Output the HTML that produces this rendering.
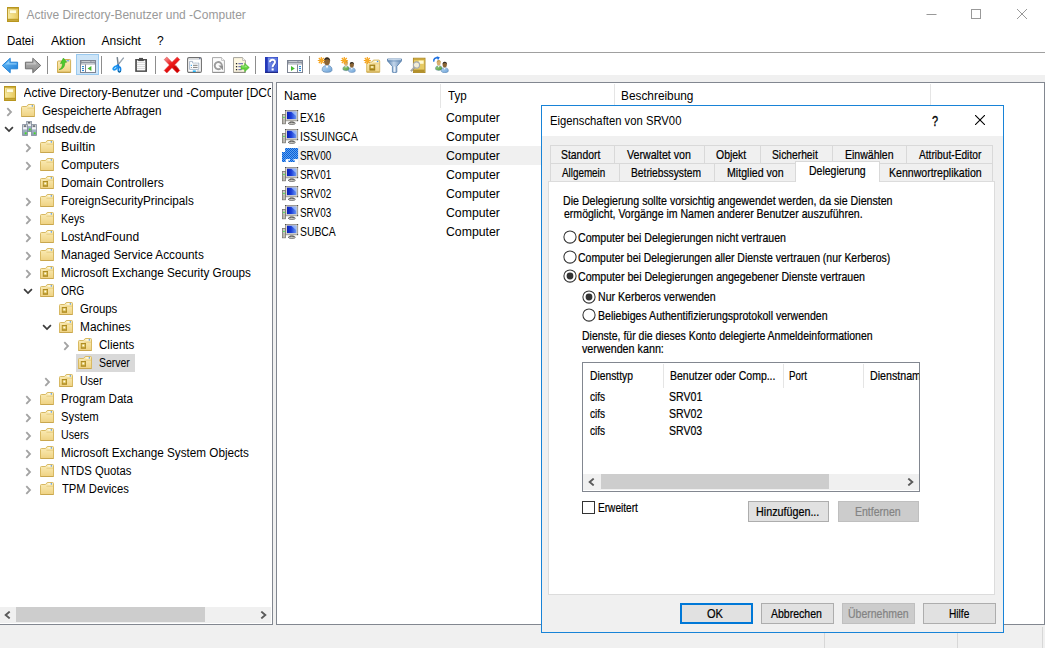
<!DOCTYPE html>
<html lang="de"><head><meta charset="utf-8"><title>Active Directory-Benutzer und -Computer</title>
<style>
html,body{margin:0;padding:0}
body{width:1045px;height:648px;overflow:hidden;position:relative;background:#f0f0f0;font-family:"Liberation Sans",sans-serif;font-size:12px;color:#000}
div,span,svg{position:absolute;box-sizing:border-box}
.abs{position:absolute}
.sec{left:0;top:0;width:1045px;height:648px}
.t{white-space:nowrap;line-height:16px;height:16px;transform-origin:0 0}
.d{font-size:13px;-webkit-text-stroke:0.22px currentColor}
.titlebar{left:0;top:0;width:1045px;height:30px;background:#fff}
.menubar{left:0;top:30px;width:1045px;height:22px;background:#fff}
.toolbar{left:0;top:52px;width:1045px;height:23px;background:#fff;border-top:1px solid #a0a0a0}
.tbhot{left:76px;top:54px;width:23px;height:21px;background:#cce4f7;border:1px solid #99c9ef}
.tbsep{top:56px;width:1px;height:18px;background:#8d8d8d}
.tree{left:0;top:82px;width:273px;height:543px;background:#fff;border-top:1px solid #828790;border-right:1px solid #828790;border-bottom:1px solid #828790}
.treesel{left:76px;top:354px;width:59px;height:18px;background:#d9d9d9}
.list{left:276px;top:82px;width:769px;height:543px;background:#fff;border:1px solid #828790}
.lsel{left:298px;top:146px;width:243px;height:19px;background:#f0f0f0}
.hsep{top:84px;width:1px;height:24px;background:#e5e5e5}
.status{left:0;top:625px;width:1045px;height:23px;background:#f0f0f0}
.ssep{top:627px;width:1px;height:21px;background:#d7d7d7}
.dialog{left:541px;top:105px;width:463px;height:528px;background:#f0f0f0;border:1px solid #1883d7}
.dtitle{left:542px;top:106px;width:461px;height:30px;background:#fff}
.tab{background:#f0f0f0;border:1px solid #d9d9d9}
.pane{left:548px;top:181px;width:447px;height:414px;background:#fff;border:1px solid #dcdcdc}
.tabsel{left:795px;top:161px;width:85px;height:21px;background:#fff;border:1px solid #d9d9d9;border-bottom:none}
.lb{left:582px;top:362px;width:338px;height:130px;background:#fff;border:1px solid #828790}
.lbsep{top:364px;width:1px;height:24px;background:#e5e5e5}
.cb{left:582px;top:501px;width:13px;height:13px;background:#fff;border:1px solid #333}
.btn{background:#e1e1e1;border:1px solid #adadad}
.btn.def{border:2px solid #0078d7}
.btn.dis{background:#cccccc;border-color:#bfbfbf}
.sb{background:#f0f0f0}
.sbth{background:#cdcdcd}
</style></head>
<body>
<svg class="abs" style="left:0;top:0" width="0" height="0"><defs><linearGradient id="gFold" x1="0" y1="0" x2="0" y2="1"><stop offset="0" stop-color="#fbeebb"/><stop offset="1" stop-color="#efd282"/></linearGradient><linearGradient id="gMmc" x1="0" y1="0" x2="1" y2="0"><stop offset="0" stop-color="#f6e9a2"/><stop offset=".6" stop-color="#efd878"/><stop offset="1" stop-color="#e5c55c"/></linearGradient><linearGradient id="gBack" x1="0" y1="0" x2="1" y2="1"><stop offset="0" stop-color="#6cc3fb"/><stop offset="1" stop-color="#1878d6"/></linearGradient><linearGradient id="gFwd" x1="0" y1="0" x2="0" y2="1"><stop offset="0" stop-color="#b9b9b9"/><stop offset="1" stop-color="#8a8a8a"/></linearGradient><linearGradient id="gX" x1="0" y1="0" x2="0.6" y2="1"><stop offset="0" stop-color="#f7a3a3"/><stop offset=".5" stop-color="#ee1a1a"/><stop offset="1" stop-color="#d40000"/></linearGradient><linearGradient id="gScr" x1="0" y1="0" x2="1" y2="0"><stop offset="0" stop-color="#0a1fb8"/><stop offset=".45" stop-color="#1c3fd8"/><stop offset="1" stop-color="#6d9af5"/></linearGradient><linearGradient id="gHelp" x1="0" y1="0" x2="1" y2="1"><stop offset="0" stop-color="#7d95ee"/><stop offset="1" stop-color="#3f5bd2"/></linearGradient><linearGradient id="gFun" x1="0" y1="0" x2="1" y2="0"><stop offset="0" stop-color="#5f86b0"/><stop offset=".45" stop-color="#c2d5ea"/><stop offset="1" stop-color="#6a8fb8"/></linearGradient><linearGradient id="gBody" x1="0" y1="0" x2="1" y2="1"><stop offset="0" stop-color="#b5d5f2"/><stop offset="1" stop-color="#6ea4d8"/></linearGradient><linearGradient id="gBodyG" x1="0" y1="0" x2="1" y2="1"><stop offset="0" stop-color="#9ad07f"/><stop offset="1" stop-color="#4f9a3a"/></linearGradient><linearGradient id="gTow" x1="0" y1="0" x2="0" y2="1"><stop offset="0" stop-color="#eef0f3"/><stop offset=".42" stop-color="#d3d9e1"/><stop offset=".5" stop-color="#a3b2c5"/><stop offset="1" stop-color="#8b9cb2"/></linearGradient><pattern id="pDith" width="2" height="2" patternUnits="userSpaceOnUse"><rect width="2" height="2" fill="#5aa0f0"/><rect width="1" height="1" fill="#0a5fd8"/><rect x="1" y="1" width="1" height="1" fill="#0a5fd8"/></pattern></defs></svg>
<div class="sec"><div class="titlebar"></div>
<svg class="abs" style="left:7px;top:7px" width="12" height="15" viewBox="0 0 12 15"><rect x="0.5" y="0.5" width="11" height="14" fill="url(#gMmc)" stroke="#bb9a2c"/><rect x="0.3" y="0" width="11.4" height="1.6" fill="#b8961e"/><rect x="0.3" y="11.8" width="11.4" height="3.2" fill="#b8961e"/><rect x="1.2" y="12.7" width="9.6" height="1" fill="#cdb048"/><rect x="2.6" y="3" width="6.6" height="3.4" fill="#fffde2" stroke="#e0c566" stroke-width=".5"/></svg>
<span class="t" style="left:26.40px;top:7px;color:#999;">Active Directory-Benutzer und -Computer</span>
<svg class="abs" style="left:920px;top:4px" width="120" height="22" viewBox="0 0 120 22"><g stroke="#999" stroke-width="1" fill="none"><path d="M6.5 10.5h10"/><rect x="51.5" y="5.5" width="9" height="9"/><path d="M97 5l10 10M107 5l-10 10"/></g></svg>
</div>
<div class="sec"><div class="menubar"></div>
<span class="t" style="left:7.14px;top:33px;transform:scaleX(0.9562);">Datei</span>
<span class="t" style="left:50.60px;top:33px;transform:scaleX(1.0338);">Aktion</span>
<span class="t" style="left:101.60px;top:33px;">Ansicht</span>
<span class="t" style="left:157.10px;top:33px;">?</span>
</div>
<div class="sec"><div class="toolbar"></div>
<div class="tbhot"></div>
<div class="tbsep" style="left:47px"></div>
<div class="tbsep" style="left:101px"></div>
<div class="tbsep" style="left:155px"></div>
<div class="tbsep" style="left:255px"></div>
<div class="tbsep" style="left:309px"></div>
<svg class="abs" style="left:1px;top:57px" width="18" height="17" viewBox="0 0 18 17"><path d="M1.3 8.5L9.2 1.2V5.2H16.6V11.8H9.2V15.8Z" fill="url(#gBack)" stroke="#2283d8" stroke-width="1" stroke-linejoin="round"/><path d="M3.4 8.3L8.3 3.8V6.2H15.6V7.6H4.6z" fill="#a6dcff" opacity=".7"/></svg><svg class="abs" style="left:24px;top:57px" width="18" height="17" viewBox="0 0 18 17"><path d="M16.7 8.5L8.8 1.2V5.2H1.4V11.8H8.8V15.8Z" fill="url(#gFwd)" stroke="#6f6f6f" stroke-width="1" stroke-linejoin="round"/><path d="M2.4 6.2H9.7V3.9L12 6.2V7.4H2.4z" fill="#d2d2d2" opacity=".7"/></svg><svg class="abs" style="left:57px;top:57px" width="15" height="16" viewBox="0 0 15 16"><path d="M0.5 4.8Q0.5 4 1.3 4H5.2L6.6 2.5H12.8Q13.6 2.5 13.6 3.3V15.3H0.5z" fill="url(#gFold)" stroke="#d2b055"/><path d="M0.5 15.3H13.6" stroke="#c09c40"/><rect x="9.6" y="3.3" width="2.6" height="1" fill="#4a8fe6"/><path d="M2 12.6C4.4 11.6 5.6 9.2 5.4 6.2L3.4 6.6L6.4 1L9.8 5.2L7.8 5.4C8 9.4 6 12.4 2 12.6z" fill="#4ccb2c" stroke="#2f9f1c" stroke-width=".5"/></svg><svg class="abs" style="left:80px;top:60px" width="16" height="13" viewBox="0 0 16 13"><rect x="0.5" y="0.5" width="15" height="12" fill="#fff" stroke="#7e8492"/><rect x="1" y="1" width="14" height="3.4" fill="#8b909c"/><path d="M1.6 1.6H10.4" stroke="#dfe2e6" stroke-width=".8"/><path d="M1.4 3.5H14.6" stroke="#d4d8de" stroke-width=".8"/><rect x="11.6" y="1.1" width="1" height="1" fill="#e8eaee"/><rect x="13.5" y="1.1" width="1" height="1" fill="#e8eaee"/><path d="M5.5 4.4V12.5" stroke="#7e8492"/><rect x="2" y="6" width="2" height="1.1" fill="#2f8bd6"/><rect x="2" y="8" width="2" height="1.1" fill="#2f8bd6"/><rect x="2" y="10" width="2" height="1.1" fill="#2f8bd6"/><path d="M11.4 5.9V11.1L7.6 8.5z" fill="#43ba2c"/></svg><svg class="abs" style="left:112px;top:56px" width="13" height="17" viewBox="0 0 13 17"><path d="M5.2 1.2L6.2 9.2" stroke="#76838f" stroke-width="1.5"/><path d="M11.7 1.6L6 8.8" stroke="#8593a1" stroke-width="1.3"/><path d="M11.7 1.6L8.2 6" stroke="#dfe6ec" stroke-width=".5" stroke-dasharray="0.8 0.8"/><path d="M6.2 8.6L4.6 10.4" stroke="#1f93ee" stroke-width="1.8"/><path d="M6 8.6L7 11" stroke="#1b6fd0" stroke-width="1.6"/><ellipse cx="3.2" cy="12" rx="2.3" ry="1.3" transform="rotate(-42 3.2 12)" fill="#eaf6ff" stroke="#1a96f2" stroke-width="1.7"/><ellipse cx="7.4" cy="13.4" rx="1.2" ry="2.3" fill="#eaf6ff" stroke="#1786e6" stroke-width="1.6"/><path d="M5.9 15.2Q7.4 17 8.9 15.2" fill="none" stroke="#165a78" stroke-width=".9"/></svg><svg class="abs" style="left:135px;top:57px" width="12" height="15" viewBox="0 0 12 15"><rect x="0.2" y="2" width="11.8" height="12.9" fill="#4d4d4d"/><rect x="1.9" y="3.4" width="8.4" height="10" fill="#fff"/><rect x="4" y="0.9" width="4" height="1.4" fill="#4d4d4d"/><rect x="3.2" y="2.9" width="5.6" height="1.2" fill="#4d4d4d"/><path d="M1.9 5.6h8.4M1.9 7.6h8.4M1.9 9.6h8.4M1.9 11.6h8.4" stroke="#c9c9c9" stroke-width=".7"/></svg><svg class="abs" style="left:163px;top:56px" width="18" height="18" viewBox="0 0 18 18"><path d="M1.2 3.6L3.8 1L9 6.3L14.2 1L16.8 3.6L11.6 9L16.8 14.4L14.2 17L9 11.7L3.8 17L1.2 14.4L6.4 9Z" fill="url(#gX)" stroke="#d63a3a" stroke-width=".5" stroke-linejoin="round"/><path d="M10.6 11.2L13 9L16 13L13.8 15z" fill="#b80000" opacity=".55"/></svg><svg class="abs" style="left:187px;top:57px" width="15" height="16" viewBox="0 0 15 16"><rect x="0.6" y="0.6" width="13.8" height="14.8" rx="1.4" fill="#fff" stroke="#707070" stroke-width="1.1"/><path d="M1.4 2.4H13.6" stroke="#d5d8dc" stroke-width=".9"/><rect x="12.2" y="0.9" width="1.2" height="1.2" fill="#5a6b9a"/><path d="M2.6 4.4H5.6V6H11.8V12.4H2.6z" fill="#fff" stroke="#a4b3c6" stroke-width=".9"/><rect x="6.4" y="4.9" width="2" height="1" fill="#e9edf2"/><rect x="9.2" y="4.9" width="2" height="1" fill="#e9edf2"/><path d="M6 8.3H10.6M6 10.4H10.6" stroke="#6f6f6f" stroke-width=".9"/><rect x="3.8" y="7.8" width="1.1" height="1.1" fill="#1fa1f2"/><rect x="3.9" y="10" width="0.9" height="0.9" fill="#7d7d7d"/><rect x="5.8" y="13.4" width="3" height="1.6" fill="#25b0f2"/><rect x="10" y="13.4" width="2.6" height="1.6" fill="#c4c4c4"/></svg><svg class="abs" style="left:212px;top:57px" width="13" height="16" viewBox="0 0 13 16"><path d="M0.5 0.6H9.6L12.4 3.4V15.4H0.5z" fill="#fbfbfb" stroke="#a9a9a9"/><path d="M0.5 15.4H12.4" stroke="#8d8d8d"/><path d="M9.6 0.6V3.4H12.4" fill="#fff" stroke="#b5b5b5" stroke-width=".8"/><path d="M9.9 8.8A3.6 3.6 0 1 0 8.6 11.4" fill="none" stroke="#9c9c9c" stroke-width="1.9"/><path d="M6.4 8.6H11V13.2z" fill="#8e8e8e"/></svg><svg class="abs" style="left:233px;top:57px" width="17" height="16" viewBox="0 0 17 16"><path d="M0.5 0.6H9.6L12.4 3.4V15.4H0.5z" fill="#fdf7e0" stroke="#a6a49c"/><path d="M0.5 15.4H12.4" stroke="#8b8981"/><path d="M9.6 0.6V3.4H12.4" fill="#fff" stroke="#b0aea6" stroke-width=".8"/><path d="M5.4 6.6H10M5.4 9.6H8M5.4 12.6H8.6" stroke="#7378b4" stroke-width="1.1"/><rect x="2.9" y="6" width="1.3" height="1.3" fill="#222"/><rect x="2.9" y="9" width="1.3" height="1.3" fill="#222"/><rect x="2.9" y="12" width="1.3" height="1.3" fill="#222"/><path d="M8 8.8H11.6V6.2L16.3 10.5L11.6 14.8V12.2H8z" fill="#5fd23a" stroke="#3fae22" stroke-width=".5" stroke-linejoin="round"/><path d="M8.6 9.4H12.2V8L14.6 10.2H8.6z" fill="#b4f09a" opacity=".8"/></svg><svg class="abs" style="left:265px;top:57px" width="13" height="16" viewBox="0 0 13 16"><rect x="0" y="0" width="13" height="15.8" fill="#2438b8"/><rect x="2.8" y="0.5" width="9.8" height="14.4" fill="url(#gHelp)"/><rect x="0" y="14.8" width="13" height="1" fill="#17207a"/><path d="M5 5.2C5 1.9 10 1.9 10 5C10 7.2 7.6 7.4 7.6 10.2" fill="none" stroke="#1b2a8a" stroke-width="1.9" transform="translate(.6 .5)" opacity=".55"/><path d="M5 5.2C5 1.9 10 1.9 10 5C10 7.2 7.6 7.4 7.6 10.2" fill="none" stroke="#fff" stroke-width="1.9"/><rect x="6.6" y="11.4" width="2.1" height="2.1" fill="#fff"/></svg><svg class="abs" style="left:287px;top:60px" width="16" height="13" viewBox="0 0 16 13"><rect x="0.5" y="0.5" width="15" height="12" fill="#fff" stroke="#7e8492"/><rect x="1" y="1" width="14" height="3.4" fill="#8b909c"/><path d="M1.6 1.6H10.4" stroke="#dfe2e6" stroke-width=".8"/><path d="M1.4 3.5H14.6" stroke="#d4d8de" stroke-width=".8"/><rect x="11.6" y="1.1" width="1" height="1" fill="#e8eaee"/><rect x="13.5" y="1.1" width="1" height="1" fill="#e8eaee"/><path d="M10.5 4.4V12.5" stroke="#7e8492"/><rect x="12" y="6" width="2" height="1.1" fill="#2f8bd6"/><rect x="12" y="8" width="2" height="1.1" fill="#2f8bd6"/><rect x="12" y="10" width="2" height="1.1" fill="#2f8bd6"/><path d="M4 5.9V11.1L7.8 8.5z" fill="#43ba2c"/></svg><svg class="abs" style="left:317px;top:56px" width="17" height="17" viewBox="0 0 17 17"><g transform="translate(4.6 0.6) scale(1.02)"><path d="M0.7 13.8C0.1 10.6 2 8.7 5.4 8.7S10.7 10.6 10.1 13.8C9 16 1.8 16 0.7 13.8z" fill="url(#gBody)" stroke="#4f78a6" stroke-width=".6"/><path d="M4 8.8L5.3 11.6L6.6 8.8z" fill="#fff"/><ellipse cx="5.3" cy="4.6" rx="2.9" ry="3.9" fill="#8a6434"/><path d="M2.6 3.8C2.6 -0.3 8.6 -0.3 8.5 4.6C7.6 2.2 5 1.8 2.6 3.8z" fill="#2e2b28"/></g><g transform="translate(0.8 1)"><path d="M3.5 0v7M0 3.5h7M1 1l5 5M6 1L1 6" stroke="#f5a21c" stroke-width="1.15"/><circle cx="3.5" cy="3.5" r="1.7" fill="#f9ad26"/></g></svg><svg class="abs" style="left:340px;top:56px" width="18" height="17" viewBox="0 0 18 17"><g transform="translate(2.4 4.2) scale(0.68)"><path d="M0.7 13.8C0.1 10.6 2 8.7 5.4 8.7S10.7 10.6 10.1 13.8C9 16 1.8 16 0.7 13.8z" fill="url(#gBodyG)" stroke="#4f78a6" stroke-width=".6"/><path d="M4 8.8L5.3 11.6L6.6 8.8z" fill="#fff"/><ellipse cx="5.3" cy="4.6" rx="2.9" ry="3.9" fill="#d9b070"/><path d="M2.6 3.8C2.6 -0.3 8.6 -0.3 8.5 4.6C7.6 2.2 5 1.8 2.6 3.8z" fill="#b89a4a"/></g><g transform="translate(8 5.4) scale(0.72)"><path d="M0.7 13.8C0.1 10.6 2 8.7 5.4 8.7S10.7 10.6 10.1 13.8C9 16 1.8 16 0.7 13.8z" fill="url(#gBody)" stroke="#4f78a6" stroke-width=".6"/><path d="M4 8.8L5.3 11.6L6.6 8.8z" fill="#fff"/><ellipse cx="5.3" cy="4.6" rx="2.9" ry="3.9" fill="#8a6434"/><path d="M2.6 3.8C2.6 -0.3 8.6 -0.3 8.5 4.6C7.6 2.2 5 1.8 2.6 3.8z" fill="#2e2b28"/></g><g transform="translate(0.8 1)"><path d="M3.5 0v7M0 3.5h7M1 1l5 5M6 1L1 6" stroke="#f5a21c" stroke-width="1.15"/><circle cx="3.5" cy="3.5" r="1.7" fill="#f9ad26"/></g></svg><svg class="abs" style="left:363px;top:56px" width="18" height="17" viewBox="0 0 18 17"><g transform="translate(3.2 3.6)"><path d="M0.5 3.4Q0.5 2.5 1.4 2.5H5.6L7.2 0.5H12.6Q13.5 0.5 13.5 1.4V12.5H0.5Z" fill="url(#gFold)" stroke="#d8b962"/><path d="M0.5 12.5H13.5" stroke="#c9a74e"/><path d="M6.4 4.2H13" stroke="#e3c777" stroke-width=".8"/><rect x="8.3" y="1.3" width="3" height="1.2" fill="#fffef4"/><rect x="10.7" y="1.3" width="1.3" height="1.2" fill="#3f8be6"/><rect x="3.2" y="5" width="5.8" height="6" fill="#a07f18"/><rect x="4.2" y="6.2" width="3.8" height="3" fill="#c9a93c"/><rect x="4.6" y="6.6" width="2.6" height="1.6" fill="#fff6c4"/></g><g transform="translate(0.8 1)"><path d="M3.5 0v7M0 3.5h7M1 1l5 5M6 1L1 6" stroke="#f5a21c" stroke-width="1.15"/><circle cx="3.5" cy="3.5" r="1.7" fill="#f9ad26"/></g></svg><svg class="abs" style="left:387px;top:58px" width="15" height="15" viewBox="0 0 15 15"><path d="M0.4 1H14.6V2.8L9.8 8.4V14.2Q7.5 15 5.4 14.2V8.4L0.4 2.8z" fill="url(#gFun)" stroke="#4f7aa8" stroke-width=".8" stroke-linejoin="round"/><path d="M0.8 2.9H14.2" stroke="#4f7aa8" stroke-width=".7"/><path d="M1 1.7H14" stroke="#dce9f6" stroke-width=".9"/><path d="M7.6 8.6V13.8" stroke="#e8f1fa" stroke-width="1.2"/></svg><svg class="abs" style="left:410px;top:57px" width="16" height="16" viewBox="0 0 16 16"><rect x="3.4" y="1.2" width="11.6" height="14.4" fill="#e6ca62" stroke="#a98522" stroke-width=".9"/><rect x="3.9" y="12.6" width="10.6" height="2.6" fill="#b3912c"/><rect x="4" y="1.7" width="10.4" height="1.2" fill="#c9a63a"/><rect x="8.6" y="3.6" width="5" height="3.2" fill="#fff8d0"/><path d="M4.4 10.4L0.9 14.2" stroke="#8d8d8d" stroke-width="1.7"/><path d="M4.2 10.2L1 13.7" stroke="#e4e4e4" stroke-width=".6"/><circle cx="6.5" cy="8" r="3.1" fill="#f4f1e6" fill-opacity=".88" stroke="#a3a9b3" stroke-width="1.1"/></svg><svg class="abs" style="left:432px;top:56px" width="18" height="17" viewBox="0 0 18 17"><g transform="translate(3 3.6) scale(0.7)"><path d="M0.7 13.8C0.1 10.6 2 8.7 5.4 8.7S10.7 10.6 10.1 13.8C9 16 1.8 16 0.7 13.8z" fill="url(#gBodyG)" stroke="#4f78a6" stroke-width=".6"/><path d="M4 8.8L5.3 11.6L6.6 8.8z" fill="#fff"/><ellipse cx="5.3" cy="4.6" rx="2.9" ry="3.9" fill="#d9b070"/><path d="M2.6 3.8C2.6 -0.3 8.6 -0.3 8.5 4.6C7.6 2.2 5 1.8 2.6 3.8z" fill="#b89a4a"/></g><g transform="translate(8.8 5.2) scale(0.74)"><path d="M0.7 13.8C0.1 10.6 2 8.7 5.4 8.7S10.7 10.6 10.1 13.8C9 16 1.8 16 0.7 13.8z" fill="url(#gBody)" stroke="#4f78a6" stroke-width=".6"/><path d="M4 8.8L5.3 11.6L6.6 8.8z" fill="#fff"/><ellipse cx="5.3" cy="4.6" rx="2.9" ry="3.9" fill="#8a6434"/><path d="M2.6 3.8C2.6 -0.3 8.6 -0.3 8.5 4.6C7.6 2.2 5 1.8 2.6 3.8z" fill="#2e2b28"/></g><path d="M1.8 5.6C1.4 2.6 3.6 1.4 6 2" fill="none" stroke="#1c6fe0" stroke-width="1.5"/><path d="M4.6 0.2L7.8 1.2L6 4.2z" fill="#1c6fe0"/></svg>
</div>
<div class="sec"><div class="tree"></div>
<div class="treesel"></div>
<svg class="abs" style="left:4px;top:86px" width="12" height="15" viewBox="0 0 12 15"><rect x="0.5" y="0.5" width="11" height="14" fill="url(#gMmc)" stroke="#bb9a2c"/><rect x="0.3" y="0" width="11.4" height="1.6" fill="#b8961e"/><rect x="0.3" y="11.8" width="11.4" height="3.2" fill="#b8961e"/><rect x="1.2" y="12.7" width="9.6" height="1" fill="#cdb048"/><rect x="2.6" y="3" width="6.6" height="3.4" fill="#fffde2" stroke="#e0c566" stroke-width=".5"/></svg>
<span class="t" style="left:23.60px;top:85px;width:247.5px;overflow:hidden;">Active Directory-Benutzer und -Computer [DC01.ndsedv.de]</span>
<svg class="abs" style="left:5.8px;top:107.4px" width="7" height="10" viewBox="0 0 7 10"><path d="M1.3 1.2L5 5L1.3 8.8" fill="none" stroke="#a3a3a3" stroke-width="1.8"/></svg>
<svg class="abs" style="left:21px;top:104px" width="14" height="13" viewBox="0 0 14 13"><path d="M0.5 3.4Q0.5 2.5 1.4 2.5H5.6L7.2 0.5H12.6Q13.5 0.5 13.5 1.4V12.5H0.5Z" fill="url(#gFold)" stroke="#d8b962"/><path d="M0.5 12.5H13.5" stroke="#c9a74e"/><path d="M6.4 4.2H13" stroke="#e3c777" stroke-width=".8"/><rect x="8.3" y="1.3" width="3" height="1.2" fill="#fffef4"/><rect x="10.7" y="1.3" width="1.3" height="1.2" fill="#3f8be6"/></svg>
<span class="t" style="left:41.91px;top:103px;transform:scaleX(0.9737);">Gespeicherte Abfragen</span>
<svg class="abs" style="left:4.3px;top:126.2px" width="10" height="7" viewBox="0 0 10 7"><path d="M1.1 1.2L5 5.1L8.9 1.2" fill="none" stroke="#3c3c3c" stroke-width="1.7"/></svg>
<svg class="abs" style="left:21px;top:120px" width="16" height="16" viewBox="0 0 16 16"><rect x="5.7" y="1.4" width="4.8" height="10.2" fill="url(#gTow)" stroke="#7f8a99" stroke-width=".8"/><rect x="6.8" y="2.3" width="2.6" height="1.1" fill="#2b2f36"/><rect x="6.3" y="4.6" width="3.6" height="1.3" fill="#f4f6f8"/><rect x="7.9" y="8.6" width="1.8" height="1.8" fill="#3fe01a"/><rect x="1.6" y="4.6" width="4.8" height="10.8" fill="url(#gTow)" stroke="#7f8a99" stroke-width=".8"/><rect x="2.7" y="5.5" width="2.6" height="1.1" fill="#2b2f36"/><rect x="2.2" y="7.8" width="3.6" height="1.3" fill="#f4f6f8"/><rect x="3.8" y="12.4" width="1.8" height="1.8" fill="#3fe01a"/><rect x="10.5" y="4.6" width="4.9" height="10.8" fill="url(#gTow)" stroke="#7f8a99" stroke-width=".8"/><rect x="11.6" y="5.5" width="2.7" height="1.1" fill="#2b2f36"/><rect x="11.1" y="7.8" width="3.7" height="1.3" fill="#f4f6f8"/><rect x="12.8" y="12.4" width="1.8" height="1.8" fill="#3fe01a"/></svg>
<span class="t" style="left:42.26px;top:121px;transform:scaleX(0.9897);">ndsedv.de</span>
<svg class="abs" style="left:24.8px;top:143.4px" width="7" height="10" viewBox="0 0 7 10"><path d="M1.3 1.2L5 5L1.3 8.8" fill="none" stroke="#a3a3a3" stroke-width="1.8"/></svg>
<svg class="abs" style="left:40px;top:140px" width="14" height="13" viewBox="0 0 14 13"><path d="M0.5 3.4Q0.5 2.5 1.4 2.5H5.6L7.2 0.5H12.6Q13.5 0.5 13.5 1.4V12.5H0.5Z" fill="url(#gFold)" stroke="#d8b962"/><path d="M0.5 12.5H13.5" stroke="#c9a74e"/><path d="M6.4 4.2H13" stroke="#e3c777" stroke-width=".8"/><rect x="8.3" y="1.3" width="3" height="1.2" fill="#fffef4"/><rect x="10.7" y="1.3" width="1.3" height="1.2" fill="#3f8be6"/></svg>
<span class="t" style="left:60.95px;top:139px;transform:scaleX(1.0452);">Builtin</span>
<svg class="abs" style="left:24.8px;top:161.4px" width="7" height="10" viewBox="0 0 7 10"><path d="M1.3 1.2L5 5L1.3 8.8" fill="none" stroke="#a3a3a3" stroke-width="1.8"/></svg>
<svg class="abs" style="left:40px;top:158px" width="14" height="13" viewBox="0 0 14 13"><path d="M0.5 3.4Q0.5 2.5 1.4 2.5H5.6L7.2 0.5H12.6Q13.5 0.5 13.5 1.4V12.5H0.5Z" fill="url(#gFold)" stroke="#d8b962"/><path d="M0.5 12.5H13.5" stroke="#c9a74e"/><path d="M6.4 4.2H13" stroke="#e3c777" stroke-width=".8"/><rect x="8.3" y="1.3" width="3" height="1.2" fill="#fffef4"/><rect x="10.7" y="1.3" width="1.3" height="1.2" fill="#3f8be6"/></svg>
<span class="t" style="left:60.90px;top:157px;transform:scaleX(0.9905);">Computers</span>
<svg class="abs" style="left:40px;top:176px" width="14" height="13" viewBox="0 0 14 13"><path d="M0.5 3.4Q0.5 2.5 1.4 2.5H5.6L7.2 0.5H12.6Q13.5 0.5 13.5 1.4V12.5H0.5Z" fill="url(#gFold)" stroke="#d8b962"/><path d="M0.5 12.5H13.5" stroke="#c9a74e"/><path d="M6.4 4.2H13" stroke="#e3c777" stroke-width=".8"/><rect x="8.3" y="1.3" width="3" height="1.2" fill="#fffef4"/><rect x="10.7" y="1.3" width="1.3" height="1.2" fill="#3f8be6"/><rect x="2.8" y="5" width="5.2" height="5.8" fill="#ae8b22"/><rect x="3.6" y="6" width="3.6" height="3.4" fill="#d9bd58"/><rect x="4.4" y="6.6" width="1.8" height="1.8" fill="#fffbe2"/></svg>
<span class="t" style="left:61.00px;top:175px;">Domain Controllers</span>
<svg class="abs" style="left:24.8px;top:197.4px" width="7" height="10" viewBox="0 0 7 10"><path d="M1.3 1.2L5 5L1.3 8.8" fill="none" stroke="#a3a3a3" stroke-width="1.8"/></svg>
<svg class="abs" style="left:40px;top:194px" width="14" height="13" viewBox="0 0 14 13"><path d="M0.5 3.4Q0.5 2.5 1.4 2.5H5.6L7.2 0.5H12.6Q13.5 0.5 13.5 1.4V12.5H0.5Z" fill="url(#gFold)" stroke="#d8b962"/><path d="M0.5 12.5H13.5" stroke="#c9a74e"/><path d="M6.4 4.2H13" stroke="#e3c777" stroke-width=".8"/><rect x="8.3" y="1.3" width="3" height="1.2" fill="#fffef4"/><rect x="10.7" y="1.3" width="1.3" height="1.2" fill="#3f8be6"/></svg>
<span class="t" style="left:61.02px;top:193px;transform:scaleX(0.9759);">ForeignSecurityPrincipals</span>
<svg class="abs" style="left:24.8px;top:215.4px" width="7" height="10" viewBox="0 0 7 10"><path d="M1.3 1.2L5 5L1.3 8.8" fill="none" stroke="#a3a3a3" stroke-width="1.8"/></svg>
<svg class="abs" style="left:40px;top:212px" width="14" height="13" viewBox="0 0 14 13"><path d="M0.5 3.4Q0.5 2.5 1.4 2.5H5.6L7.2 0.5H12.6Q13.5 0.5 13.5 1.4V12.5H0.5Z" fill="url(#gFold)" stroke="#d8b962"/><path d="M0.5 12.5H13.5" stroke="#c9a74e"/><path d="M6.4 4.2H13" stroke="#e3c777" stroke-width=".8"/><rect x="8.3" y="1.3" width="3" height="1.2" fill="#fffef4"/><rect x="10.7" y="1.3" width="1.3" height="1.2" fill="#3f8be6"/></svg>
<span class="t" style="left:61.12px;top:211px;transform:scaleX(0.8792);">Keys</span>
<svg class="abs" style="left:24.8px;top:233.4px" width="7" height="10" viewBox="0 0 7 10"><path d="M1.3 1.2L5 5L1.3 8.8" fill="none" stroke="#a3a3a3" stroke-width="1.8"/></svg>
<svg class="abs" style="left:40px;top:230px" width="14" height="13" viewBox="0 0 14 13"><path d="M0.5 3.4Q0.5 2.5 1.4 2.5H5.6L7.2 0.5H12.6Q13.5 0.5 13.5 1.4V12.5H0.5Z" fill="url(#gFold)" stroke="#d8b962"/><path d="M0.5 12.5H13.5" stroke="#c9a74e"/><path d="M6.4 4.2H13" stroke="#e3c777" stroke-width=".8"/><rect x="8.3" y="1.3" width="3" height="1.2" fill="#fffef4"/><rect x="10.7" y="1.3" width="1.3" height="1.2" fill="#3f8be6"/></svg>
<span class="t" style="left:61.00px;top:229px;">LostAndFound</span>
<svg class="abs" style="left:24.8px;top:251.4px" width="7" height="10" viewBox="0 0 7 10"><path d="M1.3 1.2L5 5L1.3 8.8" fill="none" stroke="#a3a3a3" stroke-width="1.8"/></svg>
<svg class="abs" style="left:40px;top:248px" width="14" height="13" viewBox="0 0 14 13"><path d="M0.5 3.4Q0.5 2.5 1.4 2.5H5.6L7.2 0.5H12.6Q13.5 0.5 13.5 1.4V12.5H0.5Z" fill="url(#gFold)" stroke="#d8b962"/><path d="M0.5 12.5H13.5" stroke="#c9a74e"/><path d="M6.4 4.2H13" stroke="#e3c777" stroke-width=".8"/><rect x="8.3" y="1.3" width="3" height="1.2" fill="#fffef4"/><rect x="10.7" y="1.3" width="1.3" height="1.2" fill="#3f8be6"/></svg>
<span class="t" style="left:61.02px;top:247px;transform:scaleX(0.9819);">Managed Service Accounts</span>
<svg class="abs" style="left:24.8px;top:269.4px" width="7" height="10" viewBox="0 0 7 10"><path d="M1.3 1.2L5 5L1.3 8.8" fill="none" stroke="#a3a3a3" stroke-width="1.8"/></svg>
<svg class="abs" style="left:40px;top:266px" width="14" height="13" viewBox="0 0 14 13"><path d="M0.5 3.4Q0.5 2.5 1.4 2.5H5.6L7.2 0.5H12.6Q13.5 0.5 13.5 1.4V12.5H0.5Z" fill="url(#gFold)" stroke="#d8b962"/><path d="M0.5 12.5H13.5" stroke="#c9a74e"/><path d="M6.4 4.2H13" stroke="#e3c777" stroke-width=".8"/><rect x="8.3" y="1.3" width="3" height="1.2" fill="#fffef4"/><rect x="10.7" y="1.3" width="1.3" height="1.2" fill="#3f8be6"/><rect x="2.8" y="5" width="5.2" height="5.8" fill="#ae8b22"/><rect x="3.6" y="6" width="3.6" height="3.4" fill="#d9bd58"/><rect x="4.4" y="6.6" width="1.8" height="1.8" fill="#fffbe2"/></svg>
<span class="t" style="left:61.02px;top:265px;transform:scaleX(0.9754);">Microsoft Exchange Security Groups</span>
<svg class="abs" style="left:23.3px;top:288.2px" width="10" height="7" viewBox="0 0 10 7"><path d="M1.1 1.2L5 5.1L8.9 1.2" fill="none" stroke="#3c3c3c" stroke-width="1.7"/></svg>
<svg class="abs" style="left:40px;top:284px" width="14" height="13" viewBox="0 0 14 13"><path d="M0.5 3.4Q0.5 2.5 1.4 2.5H5.6L7.2 0.5H12.6Q13.5 0.5 13.5 1.4V12.5H0.5Z" fill="url(#gFold)" stroke="#d8b962"/><path d="M0.5 12.5H13.5" stroke="#c9a74e"/><path d="M6.4 4.2H13" stroke="#e3c777" stroke-width=".8"/><rect x="8.3" y="1.3" width="3" height="1.2" fill="#fffef4"/><rect x="10.7" y="1.3" width="1.3" height="1.2" fill="#3f8be6"/><rect x="2.8" y="5" width="5.2" height="5.8" fill="#ae8b22"/><rect x="3.6" y="6" width="3.6" height="3.4" fill="#d9bd58"/><rect x="4.4" y="6.6" width="1.8" height="1.8" fill="#fffbe2"/></svg>
<span class="t" style="left:60.97px;top:283px;transform:scaleX(0.8538);">ORG</span>
<svg class="abs" style="left:59px;top:302px" width="14" height="13" viewBox="0 0 14 13"><path d="M0.5 3.4Q0.5 2.5 1.4 2.5H5.6L7.2 0.5H12.6Q13.5 0.5 13.5 1.4V12.5H0.5Z" fill="url(#gFold)" stroke="#d8b962"/><path d="M0.5 12.5H13.5" stroke="#c9a74e"/><path d="M6.4 4.2H13" stroke="#e3c777" stroke-width=".8"/><rect x="8.3" y="1.3" width="3" height="1.2" fill="#fffef4"/><rect x="10.7" y="1.3" width="1.3" height="1.2" fill="#3f8be6"/><rect x="2.8" y="5" width="5.2" height="5.8" fill="#ae8b22"/><rect x="3.6" y="6" width="3.6" height="3.4" fill="#d9bd58"/><rect x="4.4" y="6.6" width="1.8" height="1.8" fill="#fffbe2"/></svg>
<span class="t" style="left:79.93px;top:301px;transform:scaleX(0.9481);">Groups</span>
<svg class="abs" style="left:42.3px;top:324.2px" width="10" height="7" viewBox="0 0 10 7"><path d="M1.1 1.2L5 5.1L8.9 1.2" fill="none" stroke="#3c3c3c" stroke-width="1.7"/></svg>
<svg class="abs" style="left:59px;top:320px" width="14" height="13" viewBox="0 0 14 13"><path d="M0.5 3.4Q0.5 2.5 1.4 2.5H5.6L7.2 0.5H12.6Q13.5 0.5 13.5 1.4V12.5H0.5Z" fill="url(#gFold)" stroke="#d8b962"/><path d="M0.5 12.5H13.5" stroke="#c9a74e"/><path d="M6.4 4.2H13" stroke="#e3c777" stroke-width=".8"/><rect x="8.3" y="1.3" width="3" height="1.2" fill="#fffef4"/><rect x="10.7" y="1.3" width="1.3" height="1.2" fill="#3f8be6"/><rect x="2.8" y="5" width="5.2" height="5.8" fill="#ae8b22"/><rect x="3.6" y="6" width="3.6" height="3.4" fill="#d9bd58"/><rect x="4.4" y="6.6" width="1.8" height="1.8" fill="#fffbe2"/></svg>
<span class="t" style="left:80.01px;top:319px;transform:scaleX(0.9880);">Machines</span>
<svg class="abs" style="left:62.8px;top:341.4px" width="7" height="10" viewBox="0 0 7 10"><path d="M1.3 1.2L5 5L1.3 8.8" fill="none" stroke="#a3a3a3" stroke-width="1.8"/></svg>
<svg class="abs" style="left:78px;top:338px" width="14" height="13" viewBox="0 0 14 13"><path d="M0.5 3.4Q0.5 2.5 1.4 2.5H5.6L7.2 0.5H12.6Q13.5 0.5 13.5 1.4V12.5H0.5Z" fill="url(#gFold)" stroke="#d8b962"/><path d="M0.5 12.5H13.5" stroke="#c9a74e"/><path d="M6.4 4.2H13" stroke="#e3c777" stroke-width=".8"/><rect x="8.3" y="1.3" width="3" height="1.2" fill="#fffef4"/><rect x="10.7" y="1.3" width="1.3" height="1.2" fill="#3f8be6"/><rect x="2.8" y="5" width="5.2" height="5.8" fill="#ae8b22"/><rect x="3.6" y="6" width="3.6" height="3.4" fill="#d9bd58"/><rect x="4.4" y="6.6" width="1.8" height="1.8" fill="#fffbe2"/></svg>
<span class="t" style="left:98.92px;top:337px;transform:scaleX(0.9622);">Clients</span>
<svg class="abs" style="left:78px;top:356px" width="14" height="13" viewBox="0 0 14 13"><path d="M0.5 3.4Q0.5 2.5 1.4 2.5H5.6L7.2 0.5H12.6Q13.5 0.5 13.5 1.4V12.5H0.5Z" fill="url(#gFold)" stroke="#d8b962"/><path d="M0.5 12.5H13.5" stroke="#c9a74e"/><path d="M6.4 4.2H13" stroke="#e3c777" stroke-width=".8"/><rect x="8.3" y="1.3" width="3" height="1.2" fill="#fffef4"/><rect x="10.7" y="1.3" width="1.3" height="1.2" fill="#3f8be6"/><rect x="2.8" y="5" width="5.2" height="5.8" fill="#ae8b22"/><rect x="3.6" y="6" width="3.6" height="3.4" fill="#d9bd58"/><rect x="4.4" y="6.6" width="1.8" height="1.8" fill="#fffbe2"/></svg>
<span class="t" style="left:98.96px;top:355px;transform:scaleX(0.8719);">Server</span>
<svg class="abs" style="left:43.8px;top:377.4px" width="7" height="10" viewBox="0 0 7 10"><path d="M1.3 1.2L5 5L1.3 8.8" fill="none" stroke="#a3a3a3" stroke-width="1.8"/></svg>
<svg class="abs" style="left:59px;top:374px" width="14" height="13" viewBox="0 0 14 13"><path d="M0.5 3.4Q0.5 2.5 1.4 2.5H5.6L7.2 0.5H12.6Q13.5 0.5 13.5 1.4V12.5H0.5Z" fill="url(#gFold)" stroke="#d8b962"/><path d="M0.5 12.5H13.5" stroke="#c9a74e"/><path d="M6.4 4.2H13" stroke="#e3c777" stroke-width=".8"/><rect x="8.3" y="1.3" width="3" height="1.2" fill="#fffef4"/><rect x="10.7" y="1.3" width="1.3" height="1.2" fill="#3f8be6"/><rect x="2.8" y="5" width="5.2" height="5.8" fill="#ae8b22"/><rect x="3.6" y="6" width="3.6" height="3.4" fill="#d9bd58"/><rect x="4.4" y="6.6" width="1.8" height="1.8" fill="#fffbe2"/></svg>
<span class="t" style="left:80.11px;top:373px;transform:scaleX(0.8907);">User</span>
<svg class="abs" style="left:24.8px;top:395.4px" width="7" height="10" viewBox="0 0 7 10"><path d="M1.3 1.2L5 5L1.3 8.8" fill="none" stroke="#a3a3a3" stroke-width="1.8"/></svg>
<svg class="abs" style="left:40px;top:392px" width="14" height="13" viewBox="0 0 14 13"><path d="M0.5 3.4Q0.5 2.5 1.4 2.5H5.6L7.2 0.5H12.6Q13.5 0.5 13.5 1.4V12.5H0.5Z" fill="url(#gFold)" stroke="#d8b962"/><path d="M0.5 12.5H13.5" stroke="#c9a74e"/><path d="M6.4 4.2H13" stroke="#e3c777" stroke-width=".8"/><rect x="8.3" y="1.3" width="3" height="1.2" fill="#fffef4"/><rect x="10.7" y="1.3" width="1.3" height="1.2" fill="#3f8be6"/></svg>
<span class="t" style="left:61.04px;top:391px;transform:scaleX(0.9641);">Program Data</span>
<svg class="abs" style="left:24.8px;top:413.4px" width="7" height="10" viewBox="0 0 7 10"><path d="M1.3 1.2L5 5L1.3 8.8" fill="none" stroke="#a3a3a3" stroke-width="1.8"/></svg>
<svg class="abs" style="left:40px;top:410px" width="14" height="13" viewBox="0 0 14 13"><path d="M0.5 3.4Q0.5 2.5 1.4 2.5H5.6L7.2 0.5H12.6Q13.5 0.5 13.5 1.4V12.5H0.5Z" fill="url(#gFold)" stroke="#d8b962"/><path d="M0.5 12.5H13.5" stroke="#c9a74e"/><path d="M6.4 4.2H13" stroke="#e3c777" stroke-width=".8"/><rect x="8.3" y="1.3" width="3" height="1.2" fill="#fffef4"/><rect x="10.7" y="1.3" width="1.3" height="1.2" fill="#3f8be6"/></svg>
<span class="t" style="left:60.93px;top:409px;transform:scaleX(0.9419);">System</span>
<svg class="abs" style="left:24.8px;top:431.4px" width="7" height="10" viewBox="0 0 7 10"><path d="M1.3 1.2L5 5L1.3 8.8" fill="none" stroke="#a3a3a3" stroke-width="1.8"/></svg>
<svg class="abs" style="left:40px;top:428px" width="14" height="13" viewBox="0 0 14 13"><path d="M0.5 3.4Q0.5 2.5 1.4 2.5H5.6L7.2 0.5H12.6Q13.5 0.5 13.5 1.4V12.5H0.5Z" fill="url(#gFold)" stroke="#d8b962"/><path d="M0.5 12.5H13.5" stroke="#c9a74e"/><path d="M6.4 4.2H13" stroke="#e3c777" stroke-width=".8"/><rect x="8.3" y="1.3" width="3" height="1.2" fill="#fffef4"/><rect x="10.7" y="1.3" width="1.3" height="1.2" fill="#3f8be6"/></svg>
<span class="t" style="left:61.11px;top:427px;transform:scaleX(0.8867);">Users</span>
<svg class="abs" style="left:24.8px;top:449.4px" width="7" height="10" viewBox="0 0 7 10"><path d="M1.3 1.2L5 5L1.3 8.8" fill="none" stroke="#a3a3a3" stroke-width="1.8"/></svg>
<svg class="abs" style="left:40px;top:446px" width="14" height="13" viewBox="0 0 14 13"><path d="M0.5 3.4Q0.5 2.5 1.4 2.5H5.6L7.2 0.5H12.6Q13.5 0.5 13.5 1.4V12.5H0.5Z" fill="url(#gFold)" stroke="#d8b962"/><path d="M0.5 12.5H13.5" stroke="#c9a74e"/><path d="M6.4 4.2H13" stroke="#e3c777" stroke-width=".8"/><rect x="8.3" y="1.3" width="3" height="1.2" fill="#fffef4"/><rect x="10.7" y="1.3" width="1.3" height="1.2" fill="#3f8be6"/></svg>
<span class="t" style="left:61.02px;top:445px;transform:scaleX(0.9752);">Microsoft Exchange System Objects</span>
<svg class="abs" style="left:24.8px;top:467.4px" width="7" height="10" viewBox="0 0 7 10"><path d="M1.3 1.2L5 5L1.3 8.8" fill="none" stroke="#a3a3a3" stroke-width="1.8"/></svg>
<svg class="abs" style="left:40px;top:464px" width="14" height="13" viewBox="0 0 14 13"><path d="M0.5 3.4Q0.5 2.5 1.4 2.5H5.6L7.2 0.5H12.6Q13.5 0.5 13.5 1.4V12.5H0.5Z" fill="url(#gFold)" stroke="#d8b962"/><path d="M0.5 12.5H13.5" stroke="#c9a74e"/><path d="M6.4 4.2H13" stroke="#e3c777" stroke-width=".8"/><rect x="8.3" y="1.3" width="3" height="1.2" fill="#fffef4"/><rect x="10.7" y="1.3" width="1.3" height="1.2" fill="#3f8be6"/></svg>
<span class="t" style="left:61.06px;top:463px;transform:scaleX(0.9433);">NTDS Quotas</span>
<svg class="abs" style="left:24.8px;top:485.4px" width="7" height="10" viewBox="0 0 7 10"><path d="M1.3 1.2L5 5L1.3 8.8" fill="none" stroke="#a3a3a3" stroke-width="1.8"/></svg>
<svg class="abs" style="left:40px;top:482px" width="14" height="13" viewBox="0 0 14 13"><path d="M0.5 3.4Q0.5 2.5 1.4 2.5H5.6L7.2 0.5H12.6Q13.5 0.5 13.5 1.4V12.5H0.5Z" fill="url(#gFold)" stroke="#d8b962"/><path d="M0.5 12.5H13.5" stroke="#c9a74e"/><path d="M6.4 4.2H13" stroke="#e3c777" stroke-width=".8"/><rect x="8.3" y="1.3" width="3" height="1.2" fill="#fffef4"/><rect x="10.7" y="1.3" width="1.3" height="1.2" fill="#3f8be6"/></svg>
<span class="t" style="left:61.77px;top:481px;transform:scaleX(0.9371);">TPM Devices</span>
<div class="sb" style="left:0px;top:607px;width:271px;height:16px"></div><div class="sbth" style="left:16px;top:607px;width:189px;height:15px"></div><svg class="abs" style="left:4px;top:610.5px" width="7" height="8" viewBox="0 0 7 8"><path d="M5.7 0.6L1.7 4L5.7 7.4" fill="none" stroke="#5a5a5a" stroke-width="1.9"/></svg><svg class="abs" style="left:260px;top:610.5px" width="7" height="8" viewBox="0 0 7 8"><path d="M1.3 0.6L5.3 4L1.3 7.4" fill="none" stroke="#5a5a5a" stroke-width="1.9"/></svg>
</div>
<div class="sec"><div class="list"></div>
<div class="lsel"></div>
<div class="hsep" style="left:440px"></div>
<div class="hsep" style="left:614px"></div>
<div class="hsep" style="left:930px"></div>
<span class="t" style="left:283.88px;top:88px;transform:scaleX(1.0197);">Name</span>
<span class="t" style="left:447.66px;top:88px;transform:scaleX(0.9653);">Typ</span>
<span class="t" style="left:620.61px;top:88px;transform:scaleX(0.9874);">Beschreibung</span>
<svg class="abs" style="left:282px;top:110px" width="17" height="15" viewBox="0 0 17 15"><rect x="3.5" y="0.4" width="12.2" height="10.4" fill="#d9d6ce" stroke="#8c8a84" stroke-width=".8"/><rect x="3.1" y="0" width="1" height="1" fill="#4a4a4a"/><rect x="15.1" y="0" width="1" height="1" fill="#4a4a4a"/><rect x="15.1" y="10.1" width="1" height="1" fill="#4a4a4a"/><rect x="5" y="1.7" width="9.4" height="7.4" fill="url(#gScr)"/><path d="M9.2 1.7h5.2v4.6z" fill="#a9c6fa" opacity=".75"/><rect x="0.4" y="4.4" width="3" height="9.4" fill="#cfccc5" stroke="#77756f" stroke-width=".8"/><rect x="1.3" y="6.8" width="1.3" height="1.3" fill="#2de03a"/><path d="M1.9 9v4" stroke="#9a9892" stroke-width=".7"/><rect x="8" y="11" width="3.6" height="1.5" fill="#a8a6a0"/><ellipse cx="9.8" cy="13.3" rx="3.5" ry="1" fill="#e6e4de" stroke="#3c3c3c" stroke-width=".8"/></svg>
<span class="t" style="left:300.25px;top:110px;transform:scaleX(0.8541);">EX16</span>
<span class="t" style="left:446.19px;top:110px;transform:scaleX(1.0231);">Computer</span>
<svg class="abs" style="left:282px;top:129px" width="17" height="15" viewBox="0 0 17 15"><rect x="3.5" y="0.4" width="12.2" height="10.4" fill="#d9d6ce" stroke="#8c8a84" stroke-width=".8"/><rect x="3.1" y="0" width="1" height="1" fill="#4a4a4a"/><rect x="15.1" y="0" width="1" height="1" fill="#4a4a4a"/><rect x="15.1" y="10.1" width="1" height="1" fill="#4a4a4a"/><rect x="5" y="1.7" width="9.4" height="7.4" fill="url(#gScr)"/><path d="M9.2 1.7h5.2v4.6z" fill="#a9c6fa" opacity=".75"/><rect x="0.4" y="4.4" width="3" height="9.4" fill="#cfccc5" stroke="#77756f" stroke-width=".8"/><rect x="1.3" y="6.8" width="1.3" height="1.3" fill="#2de03a"/><path d="M1.9 9v4" stroke="#9a9892" stroke-width=".7"/><rect x="8" y="11" width="3.6" height="1.5" fill="#a8a6a0"/><ellipse cx="9.8" cy="13.3" rx="3.5" ry="1" fill="#e6e4de" stroke="#3c3c3c" stroke-width=".8"/></svg>
<span class="t" style="left:300.23px;top:129px;transform:scaleX(0.8738);">ISSUINGCA</span>
<span class="t" style="left:446.19px;top:129px;transform:scaleX(1.0231);">Computer</span>
<svg class="abs" style="left:282px;top:148px" width="17" height="15" viewBox="0 0 17 15"><g fill="url(#pDith)"><rect x="3.1" y="0" width="13" height="11.1"/><rect x="0" y="4" width="3.7" height="10"/><path d="M8 11h3.5v1.5h1.5v1.5h-6.8v-1.5H8z"/></g></svg>
<span class="t" style="left:300.09px;top:148px;transform:scaleX(0.8272);">SRV00</span>
<span class="t" style="left:446.19px;top:148px;transform:scaleX(1.0231);">Computer</span>
<svg class="abs" style="left:282px;top:167px" width="17" height="15" viewBox="0 0 17 15"><rect x="3.5" y="0.4" width="12.2" height="10.4" fill="#d9d6ce" stroke="#8c8a84" stroke-width=".8"/><rect x="3.1" y="0" width="1" height="1" fill="#4a4a4a"/><rect x="15.1" y="0" width="1" height="1" fill="#4a4a4a"/><rect x="15.1" y="10.1" width="1" height="1" fill="#4a4a4a"/><rect x="5" y="1.7" width="9.4" height="7.4" fill="url(#gScr)"/><path d="M9.2 1.7h5.2v4.6z" fill="#a9c6fa" opacity=".75"/><rect x="0.4" y="4.4" width="3" height="9.4" fill="#cfccc5" stroke="#77756f" stroke-width=".8"/><rect x="1.3" y="6.8" width="1.3" height="1.3" fill="#2de03a"/><path d="M1.9 9v4" stroke="#9a9892" stroke-width=".7"/><rect x="8" y="11" width="3.6" height="1.5" fill="#a8a6a0"/><ellipse cx="9.8" cy="13.3" rx="3.5" ry="1" fill="#e6e4de" stroke="#3c3c3c" stroke-width=".8"/></svg>
<span class="t" style="left:300.09px;top:167px;transform:scaleX(0.8272);">SRV01</span>
<span class="t" style="left:446.19px;top:167px;transform:scaleX(1.0231);">Computer</span>
<svg class="abs" style="left:282px;top:186px" width="17" height="15" viewBox="0 0 17 15"><rect x="3.5" y="0.4" width="12.2" height="10.4" fill="#d9d6ce" stroke="#8c8a84" stroke-width=".8"/><rect x="3.1" y="0" width="1" height="1" fill="#4a4a4a"/><rect x="15.1" y="0" width="1" height="1" fill="#4a4a4a"/><rect x="15.1" y="10.1" width="1" height="1" fill="#4a4a4a"/><rect x="5" y="1.7" width="9.4" height="7.4" fill="url(#gScr)"/><path d="M9.2 1.7h5.2v4.6z" fill="#a9c6fa" opacity=".75"/><rect x="0.4" y="4.4" width="3" height="9.4" fill="#cfccc5" stroke="#77756f" stroke-width=".8"/><rect x="1.3" y="6.8" width="1.3" height="1.3" fill="#2de03a"/><path d="M1.9 9v4" stroke="#9a9892" stroke-width=".7"/><rect x="8" y="11" width="3.6" height="1.5" fill="#a8a6a0"/><ellipse cx="9.8" cy="13.3" rx="3.5" ry="1" fill="#e6e4de" stroke="#3c3c3c" stroke-width=".8"/></svg>
<span class="t" style="left:300.09px;top:186px;transform:scaleX(0.8272);">SRV02</span>
<span class="t" style="left:446.19px;top:186px;transform:scaleX(1.0231);">Computer</span>
<svg class="abs" style="left:282px;top:205px" width="17" height="15" viewBox="0 0 17 15"><rect x="3.5" y="0.4" width="12.2" height="10.4" fill="#d9d6ce" stroke="#8c8a84" stroke-width=".8"/><rect x="3.1" y="0" width="1" height="1" fill="#4a4a4a"/><rect x="15.1" y="0" width="1" height="1" fill="#4a4a4a"/><rect x="15.1" y="10.1" width="1" height="1" fill="#4a4a4a"/><rect x="5" y="1.7" width="9.4" height="7.4" fill="url(#gScr)"/><path d="M9.2 1.7h5.2v4.6z" fill="#a9c6fa" opacity=".75"/><rect x="0.4" y="4.4" width="3" height="9.4" fill="#cfccc5" stroke="#77756f" stroke-width=".8"/><rect x="1.3" y="6.8" width="1.3" height="1.3" fill="#2de03a"/><path d="M1.9 9v4" stroke="#9a9892" stroke-width=".7"/><rect x="8" y="11" width="3.6" height="1.5" fill="#a8a6a0"/><ellipse cx="9.8" cy="13.3" rx="3.5" ry="1" fill="#e6e4de" stroke="#3c3c3c" stroke-width=".8"/></svg>
<span class="t" style="left:300.09px;top:205px;transform:scaleX(0.8272);">SRV03</span>
<span class="t" style="left:446.19px;top:205px;transform:scaleX(1.0231);">Computer</span>
<svg class="abs" style="left:282px;top:224px" width="17" height="15" viewBox="0 0 17 15"><rect x="3.5" y="0.4" width="12.2" height="10.4" fill="#d9d6ce" stroke="#8c8a84" stroke-width=".8"/><rect x="3.1" y="0" width="1" height="1" fill="#4a4a4a"/><rect x="15.1" y="0" width="1" height="1" fill="#4a4a4a"/><rect x="15.1" y="10.1" width="1" height="1" fill="#4a4a4a"/><rect x="5" y="1.7" width="9.4" height="7.4" fill="url(#gScr)"/><path d="M9.2 1.7h5.2v4.6z" fill="#a9c6fa" opacity=".75"/><rect x="0.4" y="4.4" width="3" height="9.4" fill="#cfccc5" stroke="#77756f" stroke-width=".8"/><rect x="1.3" y="6.8" width="1.3" height="1.3" fill="#2de03a"/><path d="M1.9 9v4" stroke="#9a9892" stroke-width=".7"/><rect x="8" y="11" width="3.6" height="1.5" fill="#a8a6a0"/><ellipse cx="9.8" cy="13.3" rx="3.5" ry="1" fill="#e6e4de" stroke="#3c3c3c" stroke-width=".8"/></svg>
<span class="t" style="left:300.07px;top:224px;transform:scaleX(0.8638);">SUBCA</span>
<span class="t" style="left:446.19px;top:224px;transform:scaleX(1.0231);">Computer</span>
</div>
<div class="sec"><div class="status"></div><div class="ssep" style="left:824px"></div><div class="ssep" style="left:957px"></div><div class="ssep" style="left:1042px"></div></div>
<div class="sec"><div class="dialog"></div>
<div class="dtitle"></div>
<span class="t" style="left:550.16px;top:113px;transform:scaleX(0.9394);">Eigenschaften von SRV00</span>
<span class="t" style="left:932.11px;top:113px;font-size:14px;transform:scaleX(0.7800);-webkit-text-stroke:0.35px #000;">?</span>
<svg class="abs" style="left:975px;top:115px" width="10" height="10" viewBox="0 0 10 10"><path d="M0 0l10 10M10 0l-10 10" stroke="#000" stroke-width="1.1" fill="none"/></svg>
<div class="tab" style="left:550px;top:145px;width:65px;height:19px"></div>
<span class="t d" style="left:561.00px;top:147px;transform:scaleX(0.8000);">Standort</span>
<div class="tab" style="left:614px;top:145px;width:91px;height:19px"></div>
<span class="t d" style="left:627.00px;top:147px;transform:scaleX(0.8195);">Verwaltet von</span>
<div class="tab" style="left:704px;top:145px;width:57px;height:19px"></div>
<span class="t d" style="left:715.60px;top:147px;transform:scaleX(0.8054);">Objekt</span>
<div class="tab" style="left:760px;top:145px;width:73px;height:19px"></div>
<span class="t d" style="left:772.01px;top:147px;transform:scaleX(0.7912);">Sicherheit</span>
<div class="tab" style="left:832px;top:145px;width:75px;height:19px"></div>
<span class="t d" style="left:844.69px;top:147px;transform:scaleX(0.8086);">Einwählen</span>
<div class="tab" style="left:906px;top:145px;width:87px;height:19px"></div>
<span class="t d" style="left:919.40px;top:147px;transform:scaleX(0.7836);">Attribut-Editor</span>
<div class="tab" style="left:550px;top:163px;width:70px;height:19px"></div>
<span class="t d" style="left:562.20px;top:165px;transform:scaleX(0.7573);">Allgemein</span>
<div class="tab" style="left:619px;top:163px;width:96px;height:19px"></div>
<span class="t d" style="left:631.41px;top:165px;transform:scaleX(0.7885);">Betriebssystem</span>
<div class="tab" style="left:714px;top:163px;width:82px;height:19px"></div>
<span class="t d" style="left:726.58px;top:165px;transform:scaleX(0.8163);">Mitglied von</span>
<div class="tab" style="left:879px;top:163px;width:114px;height:19px"></div>
<span class="t d" style="left:889.39px;top:165px;transform:scaleX(0.8116);">Kennwortreplikation</span>
<div class="pane"></div>
<div class="tabsel"></div>
<span class="t d" style="left:808.59px;top:163px;transform:scaleX(0.8073);">Delegierung</span>
<span class="t d" style="left:563.18px;top:193px;transform:scaleX(0.8172);">Die Delegierung sollte vorsichtig angewendet werden, da sie Diensten</span>
<span class="t d" style="left:563.59px;top:206px;transform:scaleX(0.8101);">ermöglicht, Vorgänge im Namen anderer Benutzer auszuführen.</span>
<svg class="abs" style="left:562.6px;top:230.4px" width="14" height="14" viewBox="0 0 14 14"><circle cx="7" cy="7" r="6.1" fill="#fff" stroke="#333" stroke-width="1.05"/></svg>
<span class="t d" style="left:577.79px;top:230px;transform:scaleX(0.8126);">Computer bei Delegierungen nicht vertrauen</span>
<svg class="abs" style="left:562.6px;top:250.3px" width="14" height="14" viewBox="0 0 14 14"><circle cx="7" cy="7" r="6.1" fill="#fff" stroke="#333" stroke-width="1.05"/></svg>
<span class="t d" style="left:577.80px;top:250px;transform:scaleX(0.8049);">Computer bei Delegierungen aller Dienste vertrauen (nur Kerberos)</span>
<svg class="abs" style="left:562.6px;top:269.4px" width="14" height="14" viewBox="0 0 14 14"><circle cx="7" cy="7" r="6.1" fill="#fff" stroke="#333" stroke-width="1.05"/><circle cx="7" cy="7" r="3.4" fill="#333"/></svg>
<span class="t d" style="left:577.79px;top:269px;transform:scaleX(0.8137);">Computer bei Delegierungen angegebener Dienste vertrauen</span>
<svg class="abs" style="left:581.5px;top:289.5px" width="14" height="14" viewBox="0 0 14 14"><circle cx="7" cy="7" r="6.1" fill="#fff" stroke="#333" stroke-width="1.05"/><circle cx="7" cy="7" r="3.4" fill="#333"/></svg>
<span class="t d" style="left:597.89px;top:289px;transform:scaleX(0.8133);">Nur Kerberos verwenden</span>
<svg class="abs" style="left:581.5px;top:308.4px" width="14" height="14" viewBox="0 0 14 14"><circle cx="7" cy="7" r="6.1" fill="#fff" stroke="#333" stroke-width="1.05"/></svg>
<span class="t d" style="left:597.89px;top:308px;transform:scaleX(0.8125);">Beliebiges Authentifizierungsprotokoll verwenden</span>
<span class="t d" style="left:581.79px;top:328px;transform:scaleX(0.8075);">Dienste, für die dieses Konto delegierte Anmeldeinformationen</span>
<span class="t d" style="left:582.39px;top:341px;transform:scaleX(0.8267);">verwenden kann:</span>
<div class="lb">
</div>
<div class="lbsep" style="left:663px"></div>
<div class="lbsep" style="left:783px"></div>
<div class="lbsep" style="left:863px"></div>
<span class="t d" style="left:589.91px;top:368px;transform:scaleX(0.7924);">Diensttyp</span>
<span class="t d" style="left:669.89px;top:368px;transform:scaleX(0.8062);">Benutzer oder Comp...</span>
<span class="t d" style="left:789.45px;top:368px;transform:scaleX(0.7516);">Port</span>
<span class="t d" style="left:869.68px;top:368px;transform:scaleX(0.8200);width:59.5px;overflow:hidden;">Dienstname</span>
<span class="t d" style="left:590.01px;top:389px;transform:scaleX(0.7730);">cifs</span>
<span class="t d" style="left:669.19px;top:389px;transform:scaleX(0.8127);">SRV01</span>
<span class="t d" style="left:590.01px;top:406px;transform:scaleX(0.7730);">cifs</span>
<span class="t d" style="left:669.19px;top:406px;transform:scaleX(0.8127);">SRV02</span>
<span class="t d" style="left:590.01px;top:423px;transform:scaleX(0.7730);">cifs</span>
<span class="t d" style="left:669.19px;top:423px;transform:scaleX(0.8075);">SRV03</span>
<div class="sb" style="left:583px;top:474px;width:336px;height:16px"></div><div class="sbth" style="left:601px;top:474px;width:228px;height:15px"></div><svg class="abs" style="left:588px;top:477.5px" width="7" height="8" viewBox="0 0 7 8"><path d="M5.7 0.6L1.7 4L5.7 7.4" fill="none" stroke="#5a5a5a" stroke-width="1.9"/></svg><svg class="abs" style="left:907px;top:477.5px" width="7" height="8" viewBox="0 0 7 8"><path d="M1.3 0.6L5.3 4L1.3 7.4" fill="none" stroke="#5a5a5a" stroke-width="1.9"/></svg>
<div class="cb"></div>
<span class="t d" style="left:597.72px;top:500px;transform:scaleX(0.7781);">Erweitert</span>
<div class="btn" style="left:748px;top:501px;width:81px;height:21px"></div>
<span class="t d" style="left:756.37px;top:504px;transform:scaleX(0.8268);">Hinzufügen...</span>
<div class="btn dis" style="left:838px;top:501px;width:81px;height:21px"></div>
<span class="t d" style="left:854.89px;top:504px;color:#838383;transform:scaleX(0.8092);">Entfernen</span>
<div class="btn def" style="left:680px;top:603px;width:73px;height:21px"></div>
<span class="t d" style="left:707.16px;top:606px;transform:scaleX(0.8507);">OK</span>
<div class="btn" style="left:761px;top:603px;width:73px;height:21px"></div>
<span class="t d" style="left:771.20px;top:606px;transform:scaleX(0.8081);">Abbrechen</span>
<div class="btn dis" style="left:842px;top:603px;width:73px;height:21px"></div>
<span class="t d" style="left:847.79px;top:606px;color:#838383;transform:scaleX(0.8068);">Übernehmen</span>
<div class="btn" style="left:923px;top:603px;width:73px;height:21px"></div>
<span class="t d" style="left:948.72px;top:606px;transform:scaleX(0.7796);">Hilfe</span>
</div>
</body></html>
